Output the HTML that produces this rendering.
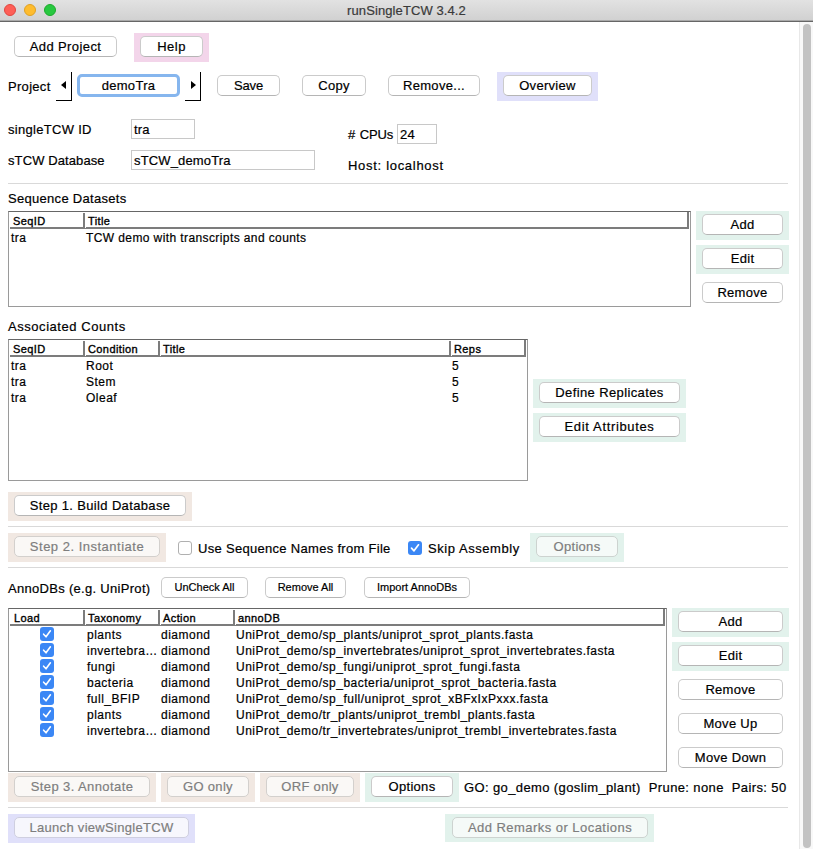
<!DOCTYPE html>
<html><head><meta charset="utf-8"><style>
*{margin:0;padding:0;box-sizing:border-box}
html,body{width:813px;height:849px;overflow:hidden;background:#fff}
body{position:relative;font-family:"Liberation Sans",sans-serif;font-size:13px;color:#000;-webkit-text-stroke:.2px}
.a{position:absolute;white-space:nowrap}
.tb{position:absolute;left:0;top:0;width:813px;height:22px;background:linear-gradient(#e2e2e2 0,#d1d1d1 20px,#a9a9a9 20px,#a9a9a9 21px,#666 21px,#666 22px)}
.tl{position:absolute;top:4px;width:12px;height:12px;border-radius:50%}
.ttl{position:absolute;left:0;top:3px;width:813px;text-align:center;color:#3a3a3a;font-size:13px;line-height:15px;letter-spacing:.1px}
.bg{position:absolute}
.pk{background:#f3d5ea}.lv{background:#e0e0fa}.mt{background:#e2f2ec}.bz{background:#f1e8e2}
.btn{position:absolute;height:21px;border:1px solid #cbcbcb;border-bottom-color:#b5b5b5;border-radius:5px;background:#fff;text-align:center;line-height:19px;letter-spacing:.3px;white-space:nowrap}
.dis{color:#7e7e7e;border-color:#d3d0cd;background:#faf8f6}
.sm{font-size:11px;letter-spacing:0}
.lbl{position:absolute;white-space:nowrap;line-height:15px;letter-spacing:.3px;margin-top:1px}
.fld{position:absolute;border:1px solid #c8c8c8;line-height:19px;padding-left:2px;letter-spacing:.15px}
.sep{position:absolute;left:8px;width:780px;height:1px;background:#d9d9d9}
.tbl{position:absolute;border:1px solid #9a9a9a;border-top-color:#666;background:#fff;overflow:hidden}
.th{position:absolute;left:1px;top:0;height:17px;border-bottom:2px solid #7c7c7c;border-right:2px solid #7c7c7c;background:#fff}
.th span{position:absolute;top:1px;-webkit-text-stroke:.35px;font-weight:normal;font-size:11px;line-height:17px;letter-spacing:.4px}
.cs{position:absolute;top:1px;width:2px;height:15px;background:#7c7c7c;border-right:1px solid #fff;box-sizing:content-box}
.tr{position:absolute;font-size:12px;line-height:16px;white-space:nowrap;letter-spacing:.5px}
.cb{position:absolute;width:14px;height:13px;border-radius:3px;background:#3b87f5}
.cb svg{position:absolute;left:0;top:0}
.sb{position:absolute;left:799px;top:22px;width:14px;height:827px;background:#f8f8f8;border-left:1px solid #e8e8e8}
.sbt{position:absolute;left:803px;top:24px;width:8px;height:824px;border-radius:4px;background:#c2c2c2}
</style></head><body>

<!-- title bar -->
<div class="tb"></div>
<div class="tl" style="left:4px;background:#fe5f57;border:1px solid #e1463f"></div>
<div class="tl" style="left:24px;background:#febc2e;border:1px solid #dfa123"></div>
<div class="tl" style="left:44px;background:#28c840;border:1px solid #1cab2b"></div>
<div class="ttl">runSingleTCW 3.4.2</div>

<!-- scrollbar -->
<div class="sb"></div>
<div class="sbt"></div>

<!-- row 1 -->
<div class="btn" style="left:14px;top:36px;width:103px;letter-spacing:.4px">Add Project</div>
<div class="bg pk" style="left:134px;top:33px;width:75px;height:29px"></div>
<div class="btn" style="left:140px;top:36px;width:63px;letter-spacing:.5px">Help</div>

<!-- project row -->
<div class="lbl" style="left:8px;top:78px">Project</div>
<div class="a" style="left:56px;top:100px;width:16px;height:1px;background:#000"></div>
<div class="a" style="left:71px;top:72px;width:1px;height:29px;background:#000"></div>
<div class="a" style="left:61px;top:81px;width:0;height:0;border-top:4px solid transparent;border-bottom:4px solid transparent;border-right:5px solid #000"></div>
<div class="a" style="left:77px;top:74px;width:103px;height:23px;border:3px solid #86b6ee;border-radius:5px;background:#fff"></div>
<div class="a" style="left:78px;top:78px;width:101px;text-align:center;line-height:15px;letter-spacing:.3px">demoTra</div>
<div class="a" style="left:185px;top:100px;width:16px;height:1px;background:#000"></div>
<div class="a" style="left:200px;top:72px;width:1px;height:29px;background:#000"></div>
<div class="a" style="left:191px;top:81px;width:0;height:0;border-top:4px solid transparent;border-bottom:4px solid transparent;border-left:5px solid #000"></div>
<div class="btn" style="left:217px;top:75px;width:63px;letter-spacing:-.2px">Save</div>
<div class="btn" style="left:302px;top:75px;width:64px">Copy</div>
<div class="btn" style="left:388px;top:75px;width:92px">Remove...</div>
<div class="bg lv" style="left:497px;top:72px;width:101px;height:29px"></div>
<div class="btn" style="left:503px;top:75px;width:89px">Overview</div>

<!-- ids -->
<div class="lbl" style="left:8px;top:121px">singleTCW ID</div>
<div class="fld" style="left:131px;top:119px;width:64px;height:20px">tra</div>
<div class="lbl" style="left:8px;top:152px;letter-spacing:.1px">sTCW Database</div>
<div class="fld" style="left:131px;top:150px;width:184px;height:20px">sTCW_demoTra</div>
<div class="lbl" style="left:348px;top:126px;letter-spacing:-.1px">#<span style="margin-left:4.5px">CPUs</span></div>
<div class="fld" style="left:397px;top:124px;width:40px;height:20px">24</div>
<div class="lbl" style="left:348px;top:157px;letter-spacing:.7px">Host: localhost</div>
<div class="sep" style="top:183px"></div>

<!-- sequence datasets -->
<div class="lbl" style="left:8px;top:190px">Sequence Datasets</div>
<div class="tbl" style="left:8px;top:211px;width:683px;height:96px">
  <div class="th" style="width:679px"><div class="cs" style="left:73px"></div><span style="left:3px">SeqID</span><span style="left:78px">Title</span></div>
  <div class="tr" style="left:2px;top:18px">tra</div>
  <div class="tr" style="left:77px;top:18px;letter-spacing:.4px">TCW demo with transcripts and counts</div>
</div>
</div>
<div class="bg mt" style="left:696px;top:211px;width:93px;height:29px"></div>
<div class="btn" style="left:702px;top:214px;width:81px">Add</div>
<div class="bg mt" style="left:696px;top:245px;width:93px;height:29px"></div>
<div class="btn" style="left:702px;top:248px;width:81px">Edit</div>
<div class="btn" style="left:702px;top:282px;width:81px">Remove</div>

<!-- associated counts -->
<div class="lbl" style="left:8px;top:318px;letter-spacing:.55px">Associated Counts</div>
<div class="tbl" style="left:8px;top:339px;width:520px;height:142px">
  <div class="th" style="width:516px"><div class="cs" style="left:73px"></div><div class="cs" style="left:148px"></div><div class="cs" style="left:439px"></div><span style="left:3px">SeqID</span><span style="left:78px">Condition</span><span style="left:153px">Title</span><span style="left:444px">Reps</span></div>
  <div class="tr" style="left:2px;top:18px">tra</div><div class="tr" style="left:77px;top:18px">Root</div><div class="tr" style="left:443px;top:18px">5</div>
  <div class="tr" style="left:2px;top:34px">tra</div><div class="tr" style="left:77px;top:34px">Stem</div><div class="tr" style="left:443px;top:34px">5</div>
  <div class="tr" style="left:2px;top:50px">tra</div><div class="tr" style="left:77px;top:50px">Oleaf</div><div class="tr" style="left:443px;top:50px">5</div>
</div>
<div class="bg mt" style="left:533px;top:379px;width:153px;height:29px"></div>
<div class="btn" style="left:539px;top:382px;width:141px;letter-spacing:.38px">Define Replicates</div>
<div class="bg mt" style="left:533px;top:413px;width:153px;height:29px"></div>
<div class="btn" style="left:539px;top:416px;width:141px;letter-spacing:.65px">Edit Attributes</div>

<!-- step 1 -->
<div class="bg bz" style="left:8px;top:492px;width:184px;height:29px"></div>
<div class="btn" style="left:14px;top:495px;width:172px;letter-spacing:.35px">Step 1. Build Database</div>
<div class="sep" style="top:526px"></div>

<!-- step 2 -->
<div class="bg bz" style="left:8px;top:533px;width:158px;height:29px"></div>
<div class="btn dis" style="left:14px;top:536px;width:146px;letter-spacing:.5px">Step 2. Instantiate</div>
<div class="a" style="left:178px;top:541px;width:14px;height:14px;border:1px solid #b0b0b0;border-radius:3px;background:#fff"></div>
<div class="lbl" style="left:198px;top:540px">Use Sequence Names from File</div>
<div class="cb" style="left:408px;top:541px;height:14px"><svg width="14" height="14" viewBox="0 0 14 14"><path d="M3.5 7.2 L6 9.8 L10.5 3.8" fill="none" stroke="#fff" stroke-width="1.7" stroke-linecap="round" stroke-linejoin="round"/></svg></div>
<div class="lbl" style="left:428px;top:540px;letter-spacing:.55px">Skip Assembly</div>
<div class="bg mt" style="left:530px;top:533px;width:94px;height:29px"></div>
<div class="btn dis" style="left:536px;top:536px;width:82px;background:#f5faf8;border-color:#cdd3d0">Options</div>
<div class="sep" style="top:567px"></div>

<!-- annodbs -->
<div class="lbl" style="left:8px;top:580px">AnnoDBs (e.g. UniProt)</div>
<div class="btn sm" style="left:161px;top:577px;width:87px">UnCheck All</div>
<div class="btn sm" style="left:265px;top:577px;width:81px">Remove All</div>
<div class="btn sm" style="left:364px;top:577px;width:106px">Import AnnoDBs</div>

<div class="tbl" style="left:8px;top:608px;width:659px;height:164px">
  <div class="th" style="width:655px"><div class="cs" style="left:73px"></div><div class="cs" style="left:148px"></div><div class="cs" style="left:223px"></div><span style="left:4px">Load</span><span style="left:78px">Taxonomy</span><span style="left:153px">Action</span><span style="left:228px">annoDB</span></div>
  <div class="cb" style="left:31px;top:18px;height:14px"><svg width="14" height="14" viewBox="0 0 14 14"><path d="M3.6 7.2 L6 9.8 L10.4 3.8" fill="none" stroke="#fff" stroke-width="1.6" stroke-linecap="round" stroke-linejoin="round"/></svg></div>
  <div class="tr" style="left:78px;top:18px">plants</div><div class="tr" style="left:152px;top:18px">diamond</div><div class="tr" style="left:227px;top:18px">UniProt_demo/sp_plants/uniprot_sprot_plants.fasta</div>
  <div class="cb" style="left:31px;top:34px;height:14px"><svg width="14" height="14" viewBox="0 0 14 14"><path d="M3.6 7.2 L6 9.8 L10.4 3.8" fill="none" stroke="#fff" stroke-width="1.6" stroke-linecap="round" stroke-linejoin="round"/></svg></div>
  <div class="tr" style="left:78px;top:34px">invertebra…</div><div class="tr" style="left:152px;top:34px">diamond</div><div class="tr" style="left:227px;top:34px">UniProt_demo/sp_invertebrates/uniprot_sprot_invertebrates.fasta</div>
  <div class="cb" style="left:31px;top:50px;height:14px"><svg width="14" height="14" viewBox="0 0 14 14"><path d="M3.6 7.2 L6 9.8 L10.4 3.8" fill="none" stroke="#fff" stroke-width="1.6" stroke-linecap="round" stroke-linejoin="round"/></svg></div>
  <div class="tr" style="left:78px;top:50px">fungi</div><div class="tr" style="left:152px;top:50px">diamond</div><div class="tr" style="left:227px;top:50px">UniProt_demo/sp_fungi/uniprot_sprot_fungi.fasta</div>
  <div class="cb" style="left:31px;top:66px;height:14px"><svg width="14" height="14" viewBox="0 0 14 14"><path d="M3.6 7.2 L6 9.8 L10.4 3.8" fill="none" stroke="#fff" stroke-width="1.6" stroke-linecap="round" stroke-linejoin="round"/></svg></div>
  <div class="tr" style="left:78px;top:66px">bacteria</div><div class="tr" style="left:152px;top:66px">diamond</div><div class="tr" style="left:227px;top:66px">UniProt_demo/sp_bacteria/uniprot_sprot_bacteria.fasta</div>
  <div class="cb" style="left:31px;top:82px;height:14px"><svg width="14" height="14" viewBox="0 0 14 14"><path d="M3.6 7.2 L6 9.8 L10.4 3.8" fill="none" stroke="#fff" stroke-width="1.6" stroke-linecap="round" stroke-linejoin="round"/></svg></div>
  <div class="tr" style="left:78px;top:82px">full_BFIP</div><div class="tr" style="left:152px;top:82px">diamond</div><div class="tr" style="left:227px;top:82px">UniProt_demo/sp_full/uniprot_sprot_xBFxIxPxxx.fasta</div>
  <div class="cb" style="left:31px;top:98px;height:14px"><svg width="14" height="14" viewBox="0 0 14 14"><path d="M3.6 7.2 L6 9.8 L10.4 3.8" fill="none" stroke="#fff" stroke-width="1.6" stroke-linecap="round" stroke-linejoin="round"/></svg></div>
  <div class="tr" style="left:78px;top:98px">plants</div><div class="tr" style="left:152px;top:98px">diamond</div><div class="tr" style="left:227px;top:98px">UniProt_demo/tr_plants/uniprot_trembl_plants.fasta</div>
  <div class="cb" style="left:31px;top:114px;height:14px"><svg width="14" height="14" viewBox="0 0 14 14"><path d="M3.6 7.2 L6 9.8 L10.4 3.8" fill="none" stroke="#fff" stroke-width="1.6" stroke-linecap="round" stroke-linejoin="round"/></svg></div>
  <div class="tr" style="left:78px;top:114px">invertebra…</div><div class="tr" style="left:152px;top:114px">diamond</div><div class="tr" style="left:227px;top:114px">UniProt_demo/tr_invertebrates/uniprot_trembl_invertebrates.fasta</div>
</div>

<div class="bg mt" style="left:672px;top:608px;width:117px;height:29px"></div>
<div class="btn" style="left:678px;top:611px;width:105px">Add</div>
<div class="bg mt" style="left:672px;top:642px;width:117px;height:29px"></div>
<div class="btn" style="left:678px;top:645px;width:105px">Edit</div>
<div class="btn" style="left:678px;top:679px;width:105px">Remove</div>
<div class="btn" style="left:678px;top:713px;width:105px">Move Up</div>
<div class="btn" style="left:678px;top:747px;width:105px">Move Down</div>

<!-- step 3 -->
<div class="bg bz" style="left:8px;top:773px;width:148px;height:29px"></div>
<div class="btn dis" style="left:14px;top:776px;width:136px;letter-spacing:.41px">Step 3. Annotate</div>
<div class="bg bz" style="left:161px;top:773px;width:94px;height:29px"></div>
<div class="btn dis" style="left:167px;top:776px;width:82px">GO only</div>
<div class="bg bz" style="left:260px;top:773px;width:100px;height:29px"></div>
<div class="btn dis" style="left:266px;top:776px;width:88px">ORF only</div>
<div class="bg mt" style="left:365px;top:773px;width:94px;height:29px"></div>
<div class="btn" style="left:371px;top:776px;width:82px">Options</div>
<div class="lbl" style="left:464px;top:779px;letter-spacing:.38px">GO: go_demo (goslim_plant)&nbsp; Prune: none&nbsp; Pairs: 50</div>
<div class="sep" style="top:807px"></div>

<div class="bg lv" style="left:8px;top:814px;width:187px;height:29px"></div>
<div class="btn dis" style="left:14px;top:817px;width:175px;background:#f7f7fd;border-color:#cfcfe0">Launch viewSingleTCW</div>
<div class="bg mt" style="left:445px;top:814px;width:209px;height:28px"></div>
<div class="btn dis" style="left:452px;top:817px;width:196px;background:#f5faf8;border-color:#cdd3d0;letter-spacing:.46px">Add Remarks or Locations</div>

</body></html>
